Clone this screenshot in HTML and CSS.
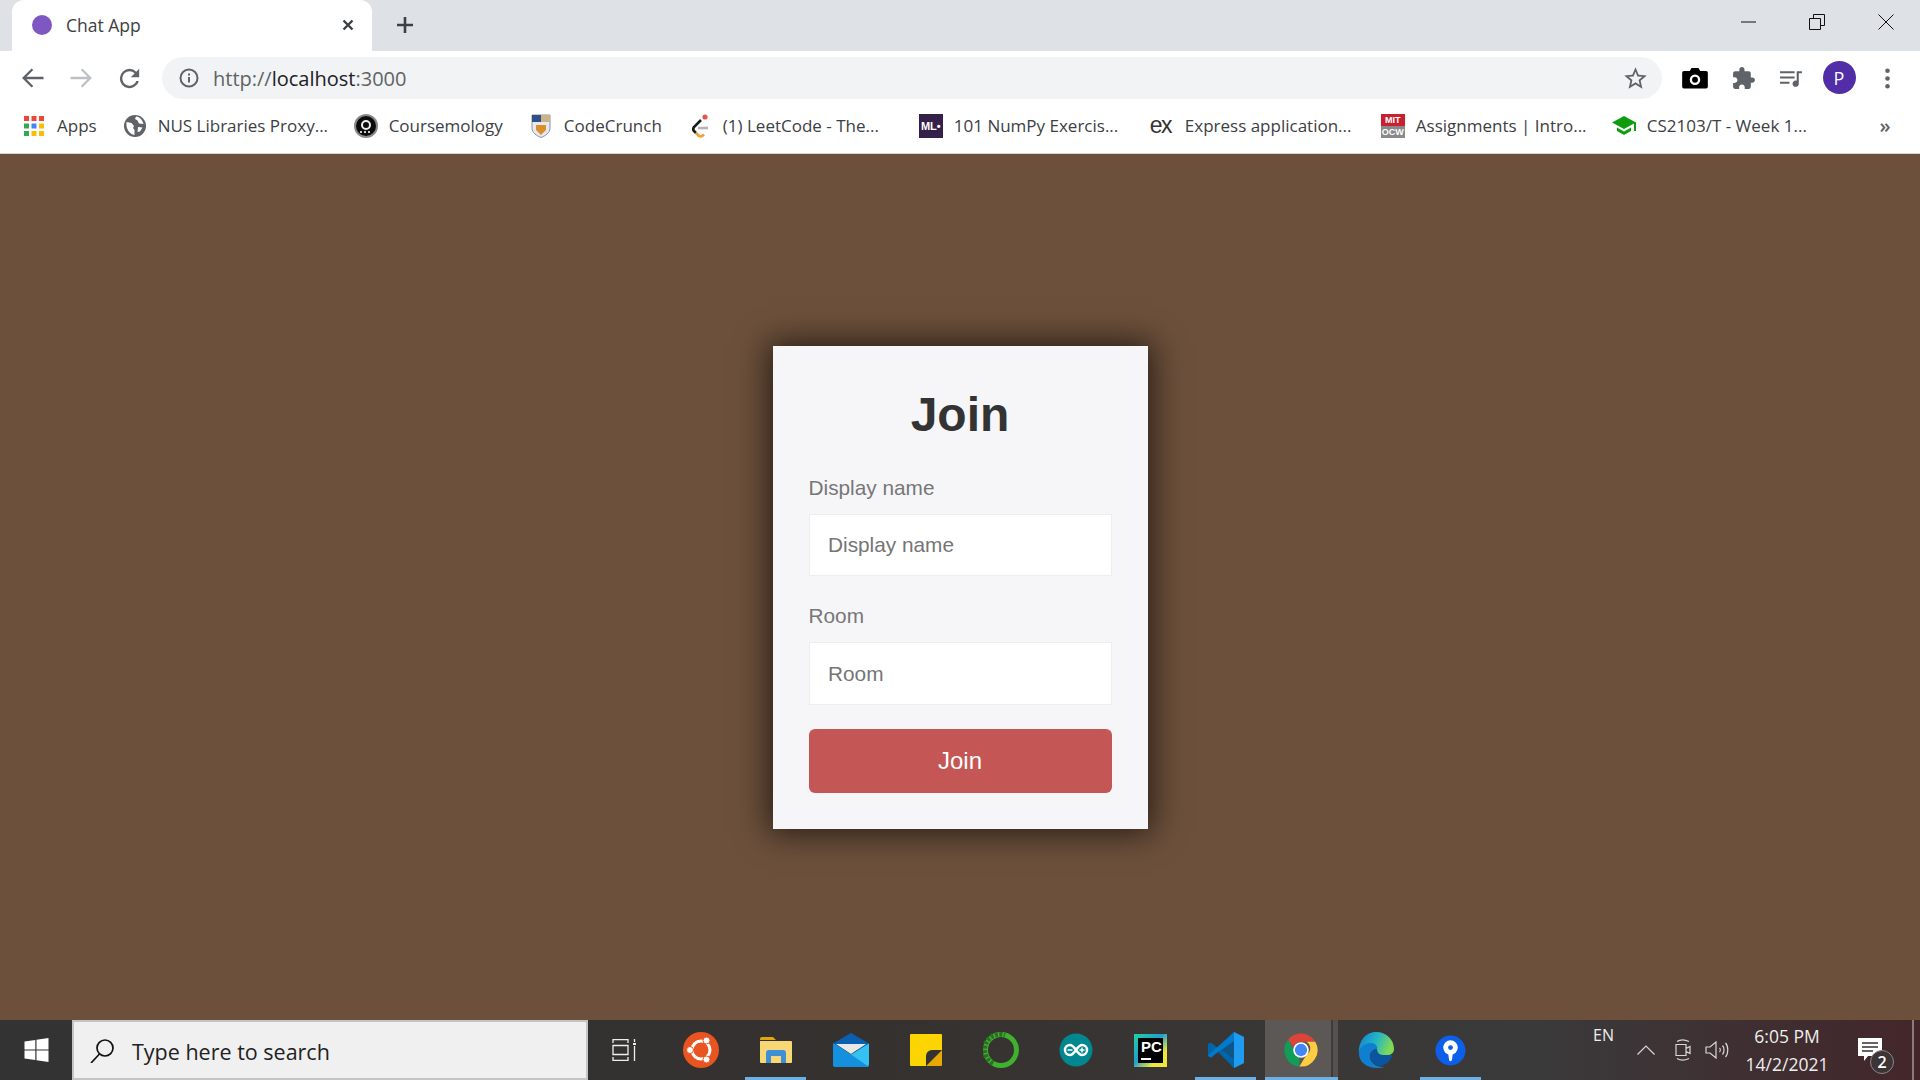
FILE: index.html
```html
<!DOCTYPE html>
<html lang="en">
<head>
    <meta charset="UTF-8">
    <title>Chat App</title>
    <link rel="stylesheet" href="styles.css">
</head>
<body>
    <header class="browser">
        <div class="tabstrip">
            <div class="tab">
                <span class="favicon"></span>
                <span class="tab-title">Chat App</span>
                <svg class="tab-close" viewBox="0 0 12 12"><path d="M1.500 1.500l9 9M10.500 1.500l-9 9"/></svg>
            </div>
            <svg class="new-tab" viewBox="0 0 18 18"><path d="M9 1v16M1 9h16"/></svg>
            <div class="window-controls">
                <span class="win-btn"><svg viewBox="0 0 16 16"><path d="M0 8h15"/></svg></span>
                <span class="win-btn"><svg viewBox="0 0 16 16"><path d="M.5 4.500h11v11H.5zM4.500 4V.5h11v11H12"/></svg></span>
                <span class="win-btn"><svg viewBox="0 0 16 16"><path d="M.5.5l15 15M15.500.5l-15 15"/></svg></span>
            </div>
        </div>

        <div class="toolbar">
            <span class="tool-btn"><svg class="arrow" viewBox="0 0 24 24"><path d="M21 12H4M11.500 4.500L4 12l7.500 7.500"/></svg></span>
            <span class="tool-btn disabled"><svg class="arrow" viewBox="0 0 24 24"><path d="M3 12h17M12.500 4.500L20 12l-7.500 7.500"/></svg></span>
            <span class="tool-btn"><svg class="icon reload" viewBox="0 0 24 24"><path d="M17.650 6.350A7.960 7.960 0 0 0 12 4a8 8 0 1 0 7.750 10h-2.080A6 6 0 1 1 12 6c1.660 0 3.140.690 4.220 1.780L13 11h7V4l-2.350 2.350z"/></svg></span>
            <div class="omnibox">
                <svg class="info-icon" viewBox="0 0 20 20"><circle cx="10" cy="10" r="8.500"/><path d="M10 9v5.500M10 5.500v2"/></svg>
                <span class="url"><span class="url-dim">http://</span>localhost<span class="url-dim">:3000</span></span>
                <svg class="star" viewBox="0 0 24 24"><path d="M22 9.240l-7.190-.620L12 2 9.190 8.630 2 9.240l5.460 4.730L5.820 21 12 17.270 18.180 21l-1.630-7.030L22 9.240zM12 15.400l-3.760 2.270 1-4.280-3.320-2.880 4.380-.380L12 6.100l1.710 4.040 4.380.380-3.320 2.880 1 4.280L12 15.400z"/></svg>
            </div>
            <span class="tool-btn"><svg class="icon black" viewBox="0 0 24 24"><path d="M9 3.500L7.500 6H2.500A1.500 1.500 0 0 0 1 7.500v12A1.500 1.500 0 0 0 2.500 21h19a1.500 1.500 0 0 0 1.500-1.500v-12A1.500 1.500 0 0 0 21.500 6h-5L15 3.500z"/><circle class="lens" cx="12" cy="13.500" r="3.500"/></svg></span>
            <span class="tool-btn"><svg class="icon" viewBox="0 0 24 24"><path d="M20.500 11H19V7c0-1.100-.9-2-2-2h-4V3.500C13 2.120 11.880 1 10.500 1S8 2.120 8 3.500V5H4c-1.100 0-1.990.9-1.990 2v3.800H3.500c1.490 0 2.700 1.210 2.700 2.700s-1.210 2.700-2.700 2.700H2V20c0 1.100.9 2 2 2h3.800v-1.500c0-1.490 1.210-2.700 2.700-2.700 1.490 0 2.700 1.210 2.700 2.700V22H17c1.100 0 2-.9 2-2v-4h1.500c1.380 0 2.500-1.120 2.500-2.500S21.880 11 20.500 11z"/></svg></span>
            <span class="tool-btn"><svg class="icon" viewBox="0 0 24 24"><path d="M15 5H1v2h14V5zm0 5H1v2h14v-2zM1 17h9v-2H1v2zM17 5v9.180c-.31-.110-.65-.180-1-.180-1.660 0-3 1.340-3 3s1.340 3 3 3 3-1.340 3-3V7h3V5h-5z"/></svg></span>
            <span class="tool-btn"><span class="avatar">P</span></span>
            <span class="tool-btn"><svg class="icon" viewBox="0 0 24 24"><circle cx="12" cy="4.500" r="2.200"/><circle cx="12" cy="12" r="2.200"/><circle cx="12" cy="19.500" r="2.200"/></svg></span>
        </div>

        <nav class="bookmarks">
            <a class="bookmark">
                <svg class="bm-icon" viewBox="0 0 24 24">
                    <rect fill="#ef4438" x="2" y="2" width="5" height="5"/><rect fill="#ef4438" x="9.500" y="2" width="5" height="5"/><rect fill="#ef4438" x="17" y="2" width="5" height="5"/>
                    <rect fill="#34a853" x="2" y="9.500" width="5" height="5"/><rect fill="#4285f4" x="9.500" y="9.500" width="5" height="5"/><rect fill="#fbbc05" x="17" y="9.500" width="5" height="5"/>
                    <rect fill="#34a853" x="2" y="17" width="5" height="5"/><rect fill="#fbbc05" x="9.500" y="17" width="5" height="5"/><rect fill="#fbbc05" x="17" y="17" width="5" height="5"/>
                </svg>
                <span>Apps</span>
            </a>
            <a class="bookmark long">
                <svg class="bm-icon" viewBox="0 0 24 24"><circle cx="12" cy="12" r="11" fill="#5f6368"/><path fill="#fff" d="M3.500 8l5 1 2.500 3-1 2 1.500 2v5C7 20.500 2.500 15 3.500 8zM13 2.500l-1 2.500 2.500 1.500 1.500 3 4.500 .5C19.500 6 17 3 13 2.500zM15 13l4.500.5-2.500 4-2.500.5z"/></svg>
                <span>NUS Libraries Proxy...</span>
            </a>
            <a class="bookmark">
                <svg class="bm-icon" viewBox="0 0 24 24"><circle cx="12" cy="12" r="12" fill="#8a8a8a"/><circle cx="12" cy="12" r="10" fill="#0c0c0c"/><circle cx="12" cy="11" r="4" fill="none" stroke="#eee" stroke-width="2"/><path stroke="#ccc" stroke-width="2" stroke-dasharray="2 2" d="M6 18h12"/></svg>
                <span>Coursemology</span>
            </a>
            <a class="bookmark">
                <svg class="bm-icon" viewBox="0 0 20 24"><path fill="#e8e8f0" stroke="#8a93a8" d="M1 1h18v13c0 5-5 8-9 9.500C6 22 1 19 1 14z"/><rect fill="#2f4f86" x="1" y="1" width="9" height="7"/><rect fill="#c9b48a" x="10" y="1" width="9" height="7"/><path fill="#d9902a" d="M5 11h10v5l-5 5-5-5z"/></svg>
                <span>CodeCrunch</span>
            </a>
            <a class="bookmark long">
                <svg class="bm-icon" viewBox="0 0 20 24"><path fill="none" stroke="#1a1a1a" stroke-width="2.600" d="M11 6l-7 7c-1 1.500-1 3 0 4l2 2"/><path fill="none" stroke="#f0a030" stroke-width="2.600" d="M6 19l3 3c1.500 1 3 .5 5-1.500"/><path stroke="#b5b5b5" stroke-width="2.600" d="M8 14h10"/><circle cx="15" cy="3" r="2.600" fill="#e0584f"/></svg>
                <span>(1) LeetCode - The...</span>
            </a>
            <a class="bookmark long">
                <span class="ml-logo">ML<i>•</i></span>
                <span>101 NumPy Exercis...</span>
            </a>
            <a class="bookmark long">
                <span class="ex-logo">ex</span>
                <span>Express application...</span>
            </a>
            <a class="bookmark long">
                <span class="mit-logo"><b>MIT</b><b class="ocw">OCW</b></span>
                <span>Assignments | Intro...</span>
            </a>
            <a class="bookmark long">
                <svg class="bm-icon" viewBox="0 0 24 20"><path fill="#0f9d0f" d="M12 0L0 6.500 12 13l10-5.500V15h2V6.500zM5 11.500V15l7 4 7-4v-3.500L12 15.500z"/></svg>
                <span>CS2103/T - Week 1...</span>
            </a>
            <span class="bm-more">»</span>
        </nav>
    </header>

    <main class="page">
        <form class="join-card">
            <h1>Join</h1>
            <div class="field">
                <label for="name">Display name</label>
                <input id="name" type="text" placeholder="Display name">
            </div>
            <div class="field">
                <label for="room">Room</label>
                <input id="room" type="text" placeholder="Room">
            </div>
            <button type="button" class="join-btn">Join</button>
        </form>
    </main>

    <footer class="taskbar">
        <span class="start">
            <svg viewBox="0 0 24 24" fill="#fff"><path d="M0 3.400L10.800 2v9.400H0zM12 1.800L24 0v11.400H12zM0 12.600h10.800V22L0 20.600zM12 12.600h12V24l-12-1.800z"/></svg>
        </span>
        <div class="search">
            <svg viewBox="0 0 24 24"><circle cx="15" cy="9" r="8"/><path d="M9.500 15L1 24"/></svg>
            <span>Type here to search</span>
        </div>
        <span class="slot">
            <svg class="line-icon" viewBox="0 0 24 22"><path d="M1 4V.5h15V4M1 18v3.500h15V18M1 6.500h15v9H1zM22.500 0v3M22.500 7v15"/><rect class="dot" x="21" y="4" width="3" height="2"/></svg>
        </span>
        <span class="slot">
            <svg viewBox="0 0 36 36"><circle cx="18" cy="18" r="18" fill="#e95420"/><circle cx="18" cy="18" r="9" fill="none" stroke="#fff" stroke-width="3"/><circle cx="7" cy="18" r="3.500" fill="#fff" stroke="#e95420"/><circle cx="23.500" cy="8.500" r="3.500" fill="#fff" stroke="#e95420"/><circle cx="23.500" cy="27.500" r="3.500" fill="#fff" stroke="#e95420"/></svg>
        </span>
        <span class="slot active">
            <svg class="files" viewBox="0 0 32 26"><path fill="#e0a50f" d="M0 2a2 2 0 0 1 2-2h11l3 3H0z"/><path fill="#f8d775" d="M0 4h31a1 1 0 0 1 1 1v20a1 1 0 0 1-1 1H1a1 1 0 0 1-1-1z"/><path fill="#3f8fd6" d="M6 26V16a3 3 0 0 1 3-3h14a3 3 0 0 1 3 3v10h-5v-7H11v7z"/></svg>
        </span>
        <span class="slot">
            <svg viewBox="0 0 36 34"><path fill="#0a5fb0" d="M18 0l18 10.500v6H0v-6z"/><path fill="#e8e8e8" d="M3 11h30L18 21z"/><path fill="#35c1f1" d="M0 10.500l18 11 18-11V31a3 3 0 0 1-3 3H3a3 3 0 0 1-3-3z"/><path fill="#1490df" d="M0 10.500l18 11L36 34H3a3 3 0 0 1-3-3z"/></svg>
        </span>
        <span class="slot">
            <svg class="sticky" viewBox="0 0 32 32"><path fill="#fcd400" d="M1 0h30a1 1 0 0 1 1 1v15L16 32H1a1 1 0 0 1-1-1V1a1 1 0 0 1 1-1z"/><path fill="#e8a800" d="M32 16v15a1 1 0 0 1-1 1H16z"/><path fill="#333" d="M32 16H22a6 6 0 0 0-6 6v10z"/></svg>
        </span>
        <span class="slot">
            <svg viewBox="0 0 36 36"><circle cx="18" cy="18" r="15.500" fill="none" stroke="#3fb22d" stroke-width="5"/><path fill="none" stroke="#2c6e25" stroke-width="5" stroke-dasharray="3 1.500" d="M10 31.500A15.500 15.500 0 0 1 22 3"/></svg>
        </span>
        <span class="slot">
            <svg viewBox="-1 -1 36 36"><circle cx="17" cy="17" r="16.500" fill="#00878f"/><path fill="none" stroke="#fff" stroke-width="2.500" d="M11 12a5 5 0 0 0 0 10c5 0 7-10 12-10a5 5 0 0 1 0 10c-5 0-7-10-12-10z"/><path stroke="#fff" stroke-width="1.500" d="M8.500 17h5M20.500 17h5M23 14.500v5"/></svg>
        </span>
        <span class="slot">
            <span class="pc-logo"><span class="pc-inner"><b>PC</b><i></i></span></span>
        </span>
        <span class="slot active">
            <svg viewBox="0 0 36 36"><path fill="#0065a9" d="M26 0L10 16 3 10.500 0 12v12l3 1.500L10 20l16 16 10-5V5z"/><path fill="#007acc" d="M26 0v9L10 20l-7 5.500L0 24v-.5L26 0z"/><path fill="#1f9cf0" d="M26 0l10 5v26l-10 5z"/><path fill="#333" opacity=".3" d="M26 9v18l-12-9z"/></svg>
        </span>
        <span class="slot active current">
            <svg viewBox="0 0 24 24"><path fill="#db4437" d="M3.400 5.100A11 11 0 0 1 21.500 6.500H12a5.500 5.500 0 0 0-5.200 3.800z"/><path fill="#0f9d58" d="M3.400 5.100l5 8.900 2.400 2.800L10.900 23A11 11 0 0 1 3.400 5.100z"/><path fill="#ffcd40" d="M21.500 6.500A11 11 0 0 1 10.900 23l4.800-7.800a5 5 0 0 0-.1-8.700z"/><circle cx="12" cy="12" r="5.200" fill="#fff"/><circle cx="12" cy="12" r="4.100" fill="#4285f4"/></svg>
        </span>
        <span class="slot">
            <svg viewBox="0 0 36 36"><defs><linearGradient id="edge" x1="0" y1="0" x2="1" y2="0.300"><stop offset="0" stop-color="#0f7fd0"/><stop offset=".55" stop-color="#23b5c8"/><stop offset="1" stop-color="#7ed957"/></linearGradient></defs><path fill="url(#edge)" d="M18 0c11 0 18 8 18 17 0 4-3 6-7 6H17c-1 0-1-1 0-2 3-2 3-8-3-9C7 11 1 17 1 22 0 10 7 0 18 0z"/><path fill="#0f7fd0" d="M1 22c0-7 6-11 12-11 4 0 7 3 6 6-3 0-8 3-7 9 1 5 7 9 12 9 2 0 3 0 4-.500-3 1.500-6 1.500-9 1.500C9 36 1 30 1 22z"/><path fill="#0b55a0" d="M12 25c0-5 4-8 7-8 0 3 2 6 6 6h5c4 0 5 0 4 2-3 6-9 9-12 9-5-1-10-5-10-9z"/></svg>
        </span>
        <span class="slot active">
            <svg class="sourcetree" viewBox="0 0 32 32"><circle cx="16" cy="16" r="15.500" fill="#0b5fe8"/><circle cx="16" cy="13" r="7.500" fill="#fff"/><circle cx="16" cy="13" r="2.500" fill="#0b5fe8"/><path fill="#fff" d="M13.500 18h5l-1 7.500a1.500 1.500 0 0 1-3 0z"/></svg>
        </span>

        <div class="tray">
            <span class="lang">EN</span>
            <svg class="tray-icon chevron" viewBox="0 0 18 10"><path d="M.5 9.500L9 1l8.500 8.500"/></svg>
            <svg class="tray-icon cam" viewBox="0 0 18 24"><path d="M2 6.500h10v11H2zM12 10.500l4-2v7l-4-2zM3 3.500c3-2 8-2 12 0M3 20.500c3 2 8 2 12 0"/></svg>
            <svg class="tray-icon speaker" viewBox="0 0 24 18"><path d="M1 6h4l6-5v16l-6-5H1zM14.500 7c1 1 1 3 0 4M17.500 4.500c2 2 2 7 0 9M20.500 2c3 3 3 11 0 14"/></svg>
            <div class="clock"><span>6:05 PM</span><span>14/2/2021</span></div>
            <span class="notify">
                <svg viewBox="0 0 24 24"><path fill="#fff" d="M0 0h24v18H10l-4 5v-5H0z"/><path stroke="#333" stroke-width="1.300" d="M4 5h16M4 9h16M4 13h11"/></svg>
                <span class="badge">2</span>
            </span>
            <span class="show-desktop"></span>
        </div>
    </footer>
</body>
</html>
```

FILE: styles.css
```css
* {
    box-sizing: border-box;
}
html, body {
    height: 100%;
}
body {
    margin: 0;
    width: 1920px;
    height: 1080px;
    display: flex;
    flex-direction: column;
    overflow: hidden;
    font-family: "Open Sans", sans-serif;
    background-color: #6c503b;
}

/* browser chrome */
.browser {
    background-color: #fff;
    color: #3c4043;
}
.tabstrip {
    height: 51px;
    padding-left: 12px;
    display: flex;
    align-items: center;
    background-color: #dee1e6;
}
.tab {
    width: 360px;
    height: 51px;
    padding: 0 17px 2px 20px;
    display: flex;
    align-items: center;
    background-color: #fff;
    border-radius: 12px 12px 0 0;
}
.favicon {
    width: 20px;
    height: 20px;
    border-radius: 50%;
    background-color: #7e57c2;
}
.tab-title {
    margin-left: 14px;
    flex: 1;
    font-size: 17.500px;
}
.tab-close {
    width: 12px;
    height: 12px;
    margin-right: 1px;
    fill: none;
    stroke: #3c4043;
    stroke-width: 2.400;
}
.new-tab {
    width: 18px;
    height: 18px;
    margin: 0 0 2px 24px;
    fill: none;
    stroke: #3c4043;
    stroke-width: 2.600;
}
.window-controls {
    margin-left: auto;
    display: flex;
}
.win-btn {
    width: 68.500px;
    height: 51px;
    padding-bottom: 8px;
    display: flex;
    align-items: center;
    justify-content: center;
}
.win-btn svg {
    width: 16px;
    height: 16px;
    fill: none;
    stroke: #111;
    stroke-width: 1;
}

.toolbar {
    height: 54px;
    padding: 0 9px;
    display: flex;
    align-items: center;
}
.tool-btn {
    width: 48px;
    height: 48px;
    flex: none;
    display: flex;
    align-items: center;
    justify-content: center;
}
.arrow {
    width: 28px;
    height: 28px;
    fill: none;
    stroke: #5f6368;
    stroke-width: 2;
}
.disabled .arrow {
    stroke: #bdc1c6;
}
.icon {
    width: 25px;
    height: 25px;
    fill: #5f6368;
}
.icon.reload {
    width: 29px;
    height: 29px;
}
.icon.black {
    width: 28px;
    height: 28px;
    fill: #000;
}
.lens {
    fill: #000;
    stroke: #fff;
    stroke-width: 2;
}
.omnibox {
    flex: 1;
    height: 42px;
    margin: 0 9px;
    padding: 0 13px 0 17px;
    display: flex;
    align-items: center;
    background-color: #f1f3f4;
    border-radius: 21px;
}
.info-icon {
    width: 20px;
    height: 20px;
    fill: none;
    stroke: #5f6368;
    stroke-width: 2;
}
.url {
    margin-left: 14px;
    flex: 1;
    font-size: 20px;
    color: #202124;
}
.url-dim {
    color: #5f6368;
}
.star {
    width: 27px;
    height: 27px;
    fill: #5f6368;
}
.avatar {
    width: 33px;
    height: 33px;
    margin-bottom: 1px;
    display: flex;
    align-items: center;
    justify-content: center;
    border-radius: 50%;
    background-color: #512da8;
    color: #fff;
    font-size: 18px;
}

.bookmarks {
    height: 49px;
    padding: 0 0 7px 22px;
    display: flex;
    align-items: center;
    gap: 26px;
    border-bottom: 1px solid #d5d5d5;
}
.bookmark {
    display: flex;
    align-items: center;
    gap: 11px;
    font-size: 17px;
    color: #3c4043;
    white-space: nowrap;
}
.bookmark.long span:last-child {
    width: 170px;
}
.bm-icon {
    width: 24px;
    height: 24px;
    flex: none;
}
.ml-logo {
    width: 24px;
    height: 24px;
    flex: none;
    display: flex;
    align-items: center;
    justify-content: center;
    background-color: #35204a;
    color: #fff;
    font: bold 11px "Liberation Sans", sans-serif;
}
.ml-logo i {
    font-style: normal;
}
.ex-logo {
    width: 24px;
    flex: none;
    font: 23px/22px "Liberation Sans", sans-serif;
    letter-spacing: -1.500px;
    margin-top: -2px;
    color: #333;
}
.mit-logo {
    width: 24px;
    height: 24px;
    flex: none;
    display: flex;
    flex-direction: column;
    font: bold 9px/12px "Liberation Sans", sans-serif;
    text-align: center;
    color: #fff;
    background-color: #c8202f;
}
.mit-logo .ocw {
    background-color: #8a8a8a;
}
.bm-more {
    margin-left: auto;
    width: 70px;
    text-align: center;
    font-size: 20px;
    font-weight: 600;
    color: #5f6368;
}

/* join form */
.page {
    flex: 1;
    display: flex;
    align-items: center;
    justify-content: center;
}
.join-card {
    width: 375px;
    padding: 36px;
    display: flex;
    flex-direction: column;
    background-color: #f6f6f9;
    box-shadow: 0 0 30px 4px rgba(0, 0, 0, 0.65);
    font-family: "Liberation Sans", Arial, sans-serif;
}
.join-card h1 {
    margin: 0 0 28px;
    font-size: 48px;
    line-height: 66px;
    text-align: center;
    color: #333;
}
.field {
    margin-bottom: 28px;
    display: flex;
    flex-direction: column;
}
.field:last-of-type {
    margin-bottom: 24px;
}
.field label {
    margin-bottom: 14px;
    font-size: 20.800px;
    line-height: 24px;
    color: #777;
}
.field input {
    height: 62.500px;
    padding: 1px 18.500px 0;
    border: 1px solid #eee;
    background-color: #fff;
    outline: none;
    font: 20.800px "Liberation Sans", Arial, sans-serif;
}
.field input::placeholder {
    color: #757575;
    opacity: 1;
}
.join-btn {
    height: 64px;
    border: none;
    border-radius: 6px;
    background-color: #c45756;
    color: #fff;
    font: 24px "Liberation Sans", Arial, sans-serif;
}

/* windows taskbar */
.taskbar {
    height: 60px;
    display: flex;
    align-items: center;
    background: linear-gradient(90deg, #333 0%, #34312f 45%, #3a3836 70%, #3a3a3b 80%, #43262a 100%);
    color: #eee;
}
.start {
    width: 72px;
    display: flex;
    justify-content: center;
}
.start svg {
    width: 25px;
    height: 24px;
}
.search {
    width: 516px;
    height: 60px;
    padding: 2px 0 0 16px;
    display: flex;
    align-items: center;
    gap: 18px;
    background-color: #f0f0f0;
    border: 2px solid #c4c4c4;
    color: #222;
    font-size: 21.500px;
}
.search svg {
    width: 24px;
    height: 24px;
    fill: none;
    stroke: #111;
    stroke-width: 1.700;
}
.slot {
    width: 75px;
    height: 60px;
    flex: none;
    display: flex;
    align-items: center;
    justify-content: center;
    position: relative;
}
.slot svg {
    width: 36px;
    height: 36px;
}
.slot .files {
    width: 32px;
    height: 26px;
}
.slot .sticky {
    width: 32px;
    height: 32px;
}
.slot .sourcetree {
    width: 31px;
    height: 31px;
}
.slot .line-icon {
    width: 24px;
    height: 22px;
    margin-right: 3px;
    fill: none;
    stroke: #eee;
    stroke-width: 1.300;
}
.line-icon .dot {
    fill: #eee;
    stroke: none;
}
.slot.active::after {
    content: "";
    position: absolute;
    left: 7px;
    right: 7px;
    bottom: 0;
    height: 3px;
    background-color: #6bb1e8;
}
.slot.current {
    background: linear-gradient(90deg, transparent 2px, #5c5856 2px, #5c5856 68px, #3e3b3a 68px, #3e3b3a 70px, #55514f 70px);
}
.slot.current::after {
    left: 2px;
    right: 0;
}
.pc-logo {
    width: 33px;
    height: 33px;
    padding: 4px;
    background: linear-gradient(135deg, #20d1a0 0%, #20a0d0 45%, #f0e838 75%);
}
.pc-inner {
    width: 100%;
    height: 100%;
    display: block;
    padding: 1px 3px;
    background-color: #000;
    color: #fff;
    font: bold 15px/16px "Liberation Sans", sans-serif;
}
.pc-inner b {
    display: block;
}
.pc-inner i {
    display: block;
    width: 10px;
    height: 2px;
    margin-top: 3px;
    background-color: #fff;
}

.tray {
    margin-left: auto;
    height: 60px;
    display: flex;
    align-items: center;
    font-size: 16px;
}
.lang {
    width: 43px;
    padding-bottom: 30px;
    line-height: 20px;
    text-align: center;
}
.tray-icon {
    fill: none;
    stroke: #d8d8d8;
    stroke-width: 1.200;
}
.chevron {
    width: 18px;
    height: 10px;
    margin-left: 12px;
}
.cam {
    width: 18px;
    height: 24px;
    margin-left: 19px;
}
.speaker {
    width: 24px;
    height: 18px;
    margin-left: 13px;
}
.clock {
    width: 100px;
    margin-left: 8px;
    display: flex;
    flex-direction: column;
    gap: 6px;
    align-items: center;
    font-size: 17.500px;
    line-height: 22px;
}
.notify {
    width: 24px;
    height: 24px;
    margin-left: 21px;
    position: relative;
}
.notify svg {
    width: 24px;
    height: 24px;
    display: block;
}
.badge {
    position: absolute;
    left: 12px;
    top: 12px;
    width: 24px;
    height: 24px;
    display: flex;
    align-items: center;
    justify-content: center;
    border-radius: 50%;
    background-color: #3d3436;
    border: 1px solid #888;
    color: #fff;
    font-size: 16px;
    font-weight: 600;
}
.show-desktop {
    width: 2px;
    height: 60px;
    margin-left: 30px;
    margin-right: 6px;
    background-color: #8a7c7e;
}
```
